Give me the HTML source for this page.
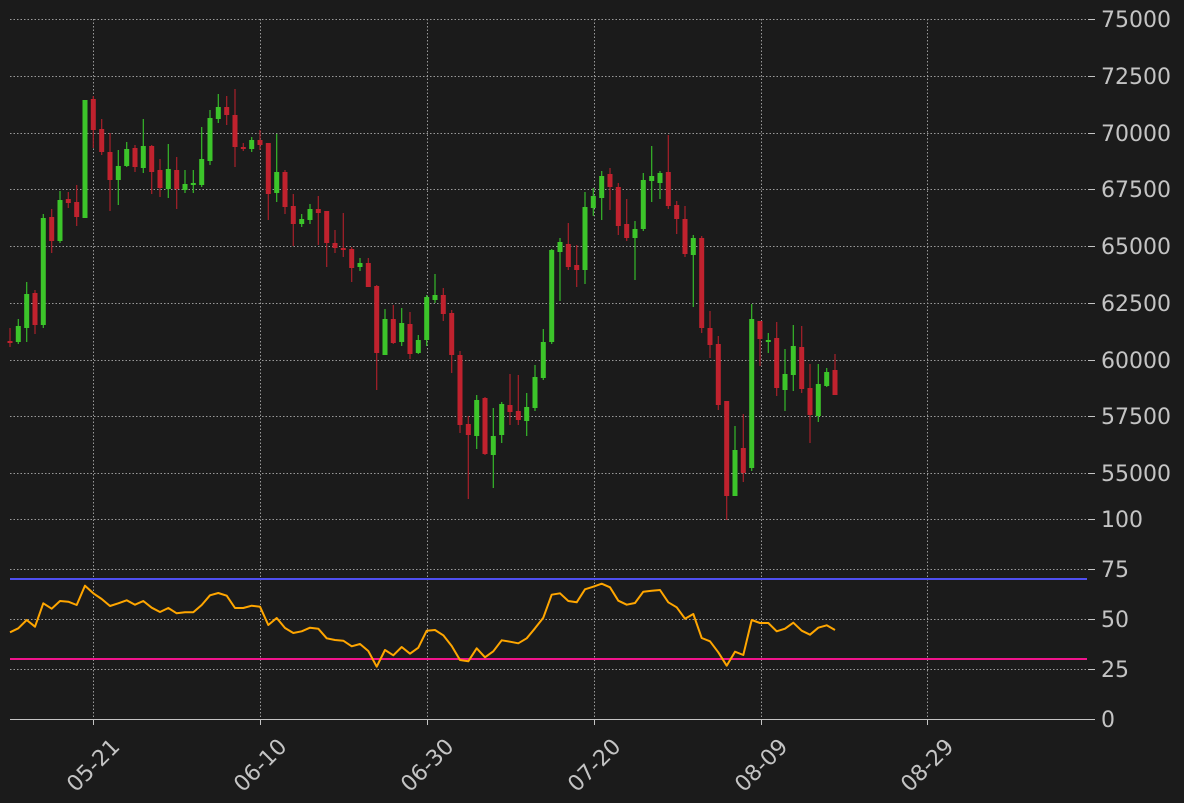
<!DOCTYPE html>
<html><head><meta charset="utf-8"><style>
html,body{margin:0;padding:0;background:#1b1b1b;}
svg{display:block;}
text{font-family:"DejaVu Sans","Liberation Sans",sans-serif;font-size:22px;fill:#c4c4c4;}
</style></head><body>
<svg width="1184" height="803" viewBox="0 0 1184 803" xmlns="http://www.w3.org/2000/svg">
<rect width="1184" height="803" fill="#1b1b1b"/>
<g stroke="#9a9a9a" stroke-width="1" stroke-dasharray="1.5,2" fill="none">
<path d="M10 19.5H1094M10 76.5H1094M10 133.5H1094M10 189.5H1094M10 246.5H1094M10 303.5H1094M10 360.5H1094M10 416.5H1094M10 473.5H1094M10 519.5H1094M10 569.5H1094M10 619.5H1094M10 669.5H1094"/>
<path d="M93.5 19V719M260.5 19V719M427.5 19V719M594.5 19V719M761.5 19V719M927.5 19V719"/>
</g>
<g stroke="#c4c4c4" stroke-width="1">
<path d="M10 719.5H1094"/>
<path d="M1088 19.5h7M1088 76.5h7M1088 133.5h7M1088 189.5h7M1088 246.5h7M1088 303.5h7M1088 360.5h7M1088 416.5h7M1088 473.5h7M1088 519.5h7M1088 569.5h7M1088 619.5h7M1088 669.5h7M1088 719.5h7"/>
<path d="M93.5 719v6M260.5 719v6M427.5 719v6M594.5 719v6M761.5 719v6M927.5 719v6"/>
</g>
<!-- green candles -->
<g stroke="#36b92a" stroke-width="1.2" fill="none">
<path d="M18.3 319V344M26.7 282V342M43.3 214V328M60 191V243M85 100V218M118.3 150V205M126.7 142V167M143.3 119V173M168.3 144V198M185 170V193M193.3 170V193M201.7 127V187M210 110V165M218.3 94V123M251.7 137V152M276.7 134V202M301.7 214V227M310 204V224M360 258V271M385 309V355M401.7 308V346M418.3 335V354M426.7 295V346M435 274V303M476.7 395V449M493.3 408V488M501.7 402V443M526.7 393V436M535 365V411M543.3 329V380M551.7 249V344M560 238V301M585 192V284M593.3 188V216M601.7 171V220M635 221V280M643.3 173V231M651.7 146V202M660 171V199M693.3 235V307M735 426V496M751.7 304V471M768.3 333V353M785 349V411M793.3 325V391M818.3 364V422M826.7 368V387"/>
</g>
<g fill="#3cc52a">
<path d="M15.8 326h5v16h-5zM24.2 294h5v34h-5zM40.8 218h5v107h-5zM57.5 200h5v41h-5zM82.5 100h5v118h-5zM115.8 166h5v14h-5zM124.2 149h5v17h-5zM140.8 146h5v22h-5zM165.8 169h5v20h-5zM182.5 184h5v6h-5zM190.8 183h5v2h-5zM199.2 159h5v26h-5zM207.5 118h5v43h-5zM215.8 107h5v12h-5zM249.2 140h5v9h-5zM274.2 172h5v21h-5zM299.2 219h5v5h-5zM307.5 209h5v11h-5zM357.5 263h5v4h-5zM382.5 319h5v36h-5zM399.2 323h5v19h-5zM415.8 340h5v13h-5zM424.2 297h5v43h-5zM432.5 295h5v5h-5zM474.2 400h5v36h-5zM490.8 436h5v19h-5zM499.2 404h5v31h-5zM524.2 407h5v14h-5zM532.5 377h5v31h-5zM540.8 342h5v36h-5zM549.2 250h5v92h-5zM557.5 242h5v10h-5zM582.5 207h5v63h-5zM590.8 196h5v12h-5zM599.2 176h5v22h-5zM632.5 229h5v9h-5zM640.8 180h5v49h-5zM649.2 176h5v5h-5zM657.5 173h5v10h-5zM690.8 238h5v17h-5zM732.5 450h5v46h-5zM749.2 319h5v149h-5zM765.8 340h5v2h-5zM782.5 374h5v16h-5zM790.8 346h5v29h-5zM815.8 384h5v32h-5zM824.2 372h5v14h-5z"/>
</g>
<!-- red candles -->
<g stroke="#a8202a" stroke-width="1.2" fill="none">
<path d="M10 328V347M35 290V334M51.7 209V253M68.3 192V208M76.7 185V226M93.3 96V148M101.7 119V155M110 133V211M135 145V172M151.7 145V194M160 159V197M176.7 157V209M226.7 96V125M235 89V167M243.3 143V151M260 130V150M268.3 143V220M285 170V214M293.3 194V246M318.3 196V245M326.7 211V267M335 230V253M343.3 213V257M351.7 247V282M368.3 258V287M376.7 285V390M393.3 305V344M410 312V359M443.3 288V321M451.7 310V373M460 351V433M468.3 416V499M485 397V455M510 374V425M518.3 375V425M568.3 223V270M576.7 245V287M610 168V210M618.3 183V235M626.7 199V241M668.3 135V209M676.7 201V234M685 206V257M701.7 236V333M710 311V358M718.3 336V410M726.7 401V520M743.3 414V482M760 321V366M776.7 322V396M801.7 326V393M810 364V443M835 354V395"/>
</g>
<g fill="#c0222e">
<path d="M7.5 341h5v2h-5zM32.5 293h5v32h-5zM49.2 217h5v24h-5zM65.8 199h5v4h-5zM74.2 202h5v15h-5zM90.8 99h5v31h-5zM99.2 129h5v23h-5zM107.5 152h5v28h-5zM132.5 148h5v19h-5zM149.2 146h5v26h-5zM157.5 170h5v18h-5zM174.2 170h5v19h-5zM224.2 107h5v8h-5zM232.5 115h5v32h-5zM240.8 147h5v2h-5zM257.5 140h5v5h-5zM265.8 143h5v51h-5zM282.5 172h5v35h-5zM290.8 206h5v18h-5zM315.8 209h5v4h-5zM324.2 211h5v32h-5zM332.5 243h5v5h-5zM340.8 248h5v2h-5zM349.2 249h5v19h-5zM365.8 263h5v24h-5zM374.2 286h5v67h-5zM390.8 319h5v24h-5zM407.5 324h5v30h-5zM440.8 295h5v19h-5zM449.2 313h5v42h-5zM457.5 355h5v70h-5zM465.8 424h5v11h-5zM482.5 398h5v56h-5zM507.5 405h5v7h-5zM515.8 411h5v9h-5zM565.8 244h5v23h-5zM574.2 265h5v5h-5zM607.5 174h5v13h-5zM615.8 187h5v39h-5zM624.2 224h5v14h-5zM665.8 172h5v34h-5zM674.2 205h5v14h-5zM682.5 219h5v35h-5zM699.2 238h5v90h-5zM707.5 328h5v17h-5zM715.8 344h5v61h-5zM724.2 401h5v95h-5zM740.8 448h5v25h-5zM757.5 321h5v18h-5zM774.2 338h5v50h-5zM799.2 347h5v42h-5zM807.5 388h5v27h-5zM832.5 370h5v25h-5z"/>
</g>
<!-- RSI -->
<path d="M10 579H1087" stroke="#4f4ff0" stroke-width="2"/>
<path d="M10 659H1087" stroke="#f0148c" stroke-width="2"/>
<polyline fill="none" stroke="#ffa600" stroke-width="2" stroke-linejoin="round" points="10,632.3 18.3,628.3 26.7,620 35,626.7 43.3,603.3 51.7,608.7 60,601 68.3,601.7 76.7,605 85,585.7 93.3,593.3 101.7,599 110,606 118.3,603.3 126.7,600.3 135,604.7 143.3,601 151.7,607.7 160,612 168.3,608 176.7,613.3 185,612.3 193.3,612.3 201.7,605 210,595.3 218.3,593 226.7,595.7 235,608 243.3,608 251.7,605.7 260,606.7 268.3,625 276.7,618 285,628 293.3,633 301.7,631.3 310,627.7 318.3,628.7 326.7,638.3 335,640 343.3,640.7 351.7,646.3 360,644 368.3,651 376.7,666.7 385,650 393.3,655.3 401.7,647 410,653.7 418.3,647.7 426.7,630.7 435,630 443.3,635.3 451.7,646 460,660 468.3,661.3 476.7,648.3 485,657.3 493.3,651.3 501.7,640.3 510,641.7 518.3,643.3 526.7,638.3 535,628.3 543.3,617.7 551.7,594.7 560,593.3 568.3,601 576.7,602.3 585,589.3 593.3,586.7 601.7,583.7 610,587.3 618.3,600.7 626.7,604.7 635,603 643.3,591.7 651.7,590.7 660,590 668.3,602.3 676.7,607.3 685,618.7 693.3,614 701.7,638 710,641.3 718.3,652.3 726.7,665.7 735,651.7 743.3,655 751.7,620 760,623 768.3,623 776.7,631.3 785,628.7 793.3,622.7 801.7,630.7 810,634.7 818.3,627.7 826.7,625.3 835,630"/>
<!-- y labels -->
<g>
<text x="1101" y="27">75000</text>
<text x="1101" y="84">72500</text>
<text x="1101" y="141">70000</text>
<text x="1101" y="197">67500</text>
<text x="1101" y="254">65000</text>
<text x="1101" y="311">62500</text>
<text x="1101" y="368">60000</text>
<text x="1101" y="424">57500</text>
<text x="1101" y="481">55000</text>
<text x="1101" y="527">100</text>
<text x="1101" y="577">75</text>
<text x="1101" y="627">50</text>
<text x="1101" y="677">25</text>
<text x="1101" y="727">0</text>
</g>
<g text-anchor="middle">
<text transform="translate(93,765) rotate(-45)" dy="0.35em">05-21</text>
<text transform="translate(260,765) rotate(-45)" dy="0.35em">06-10</text>
<text transform="translate(427,765) rotate(-45)" dy="0.35em">06-30</text>
<text transform="translate(594,765) rotate(-45)" dy="0.35em">07-20</text>
<text transform="translate(761,765) rotate(-45)" dy="0.35em">08-09</text>
<text transform="translate(927,765) rotate(-45)" dy="0.35em">08-29</text>
</g>
</svg>
</body></html>
